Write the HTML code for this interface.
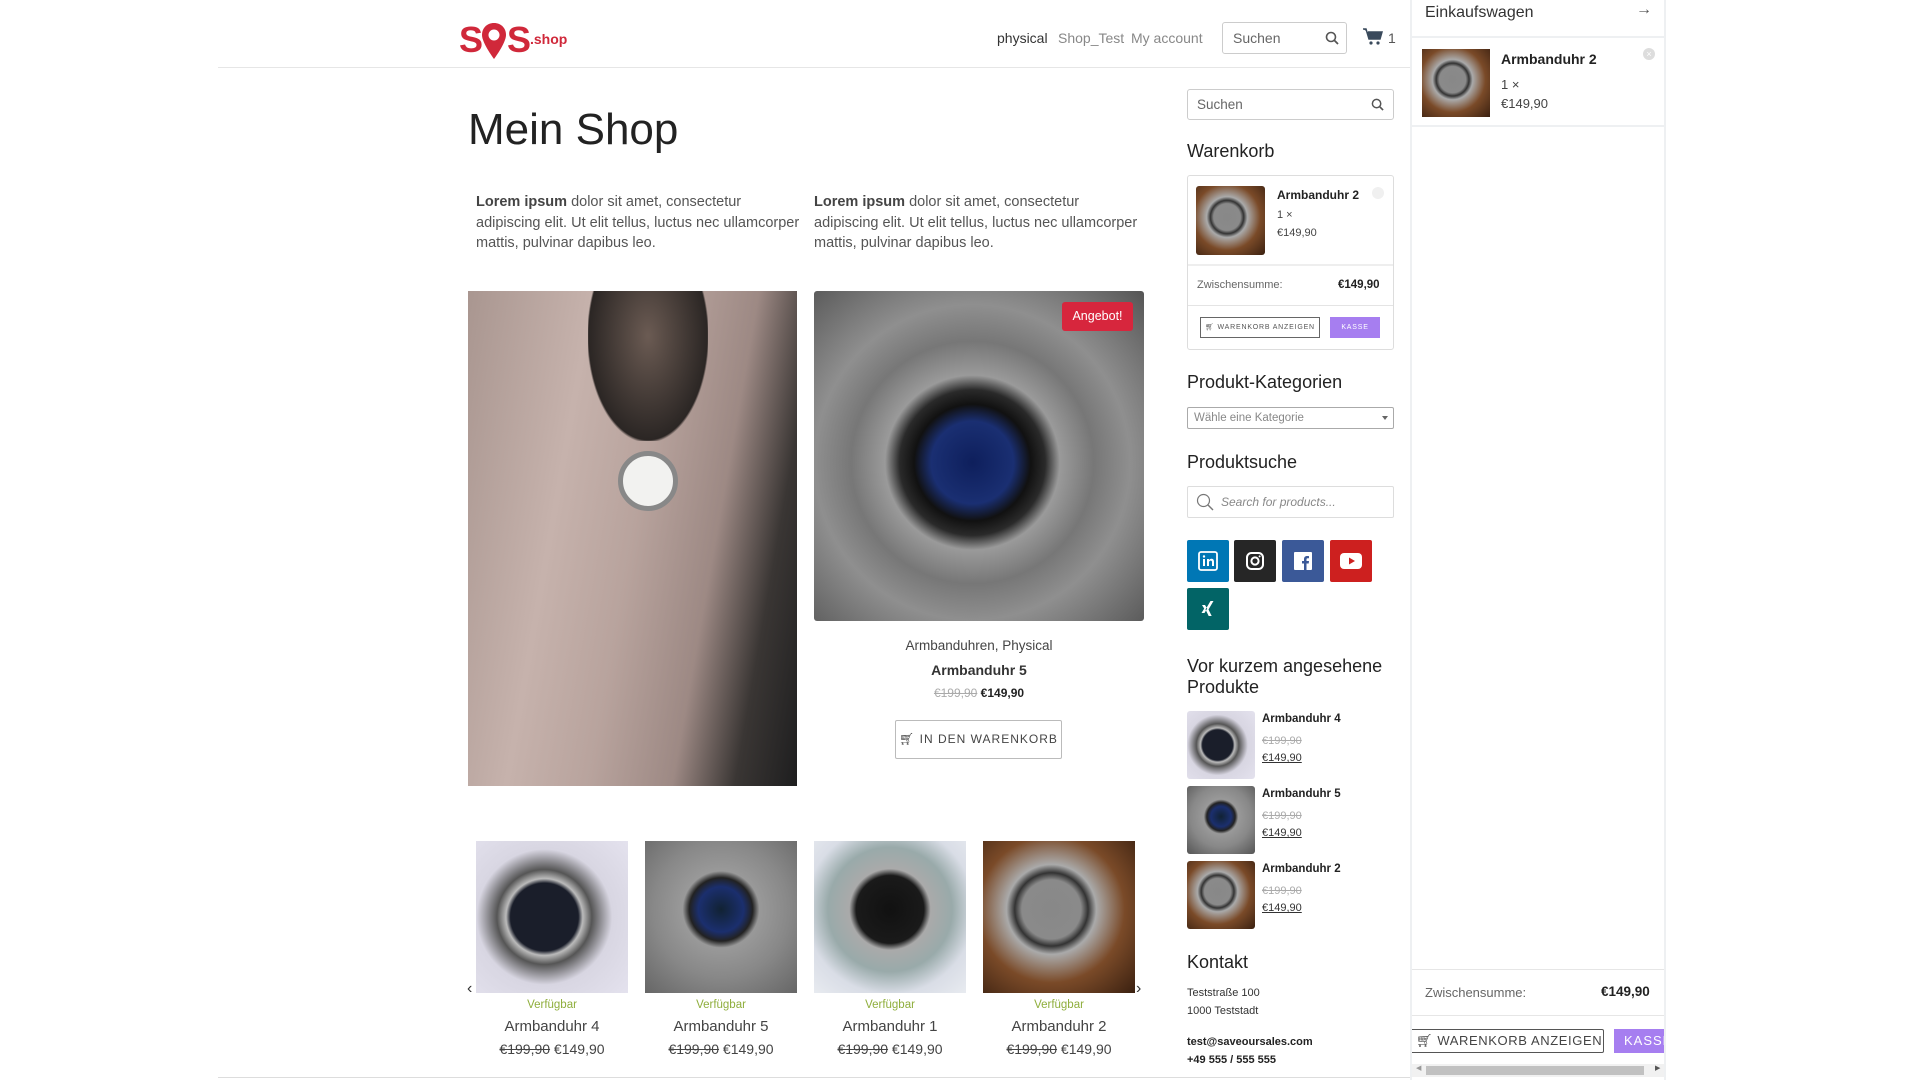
<!DOCTYPE html>
<html><head><meta charset="utf-8"><style>
*{margin:0;padding:0;box-sizing:border-box}
body{width:1920px;height:1080px;overflow:hidden;background:#fff;font-family:"Liberation Sans",sans-serif;color:#333;position:relative}
.a{position:absolute}
.t{position:absolute;white-space:nowrap}
.img{position:absolute;border-radius:3px;overflow:hidden}
.s{text-decoration:line-through;color:#aaa}
h3{font-weight:normal;font-size:18px;color:#222}
.soc{position:absolute;width:42px;height:42px;border-radius:2px;display:flex;align-items:center;justify-content:center}
</style></head><body>
<!-- header -->
<div class="a" style="left:218px;top:67px;width:1192px;height:1px;background:#e6e6e6"></div>
<div class="t" style="left:459px;top:19px;font-size:36px;font-weight:bold;color:#d0283a;letter-spacing:-1px">S</div>
<svg class="a" style="left:481px;top:22px" width="26" height="38" viewBox="0 0 26 38"><path d="M13 1C6 1 1 6 1 13c0 8 12 24 12 24s12-16 12-24C25 6 20 1 13 1z" fill="#d0283a"/><circle cx="13" cy="13" r="5.5" fill="#fff"/></svg>
<div class="t" style="left:507px;top:19px;font-size:36px;font-weight:bold;color:#d0283a">S</div>
<div class="t" style="left:530px;top:31px;font-size:14px;font-weight:bold;color:#d0283a">.shop</div>
<div class="t" style="left:997px;top:30px;font-size:14px;color:#333">physical</div>
<div class="t" style="left:1058px;top:30px;font-size:14px;color:#888">Shop_Test</div>
<div class="t" style="left:1131px;top:30px;font-size:14px;color:#888">My account</div>
<div class="a" style="left:1222px;top:22px;width:125px;height:32px;border:1px solid #ccc;border-radius:3px"></div>
<div class="t" style="left:1233px;top:30px;font-size:14px;color:#666">Suchen</div>
<svg class="a" style="left:1325px;top:31px" width="14" height="14" viewBox="0 0 14 14"><circle cx="6" cy="6" r="4.5" fill="none" stroke="#555" stroke-width="1.6"/><path d="M9.5 9.5l3.5 3.5" stroke="#555" stroke-width="1.8"/></svg>
<svg class="a" style="left:1363px;top:28px" width="20" height="18" viewBox="0 0 20 18"><path d="M0 1h3l3 10h11l2-7H5" fill="#3a4a5c" stroke="#3a4a5c" stroke-width="1.5"/><circle cx="8" cy="15" r="1.6" fill="#3a4a5c"/><circle cx="15" cy="15" r="1.6" fill="#3a4a5c"/></svg>
<div class="t" style="left:1388px;top:30px;font-size:14px;color:#555">1</div>

<!-- main -->
<div class="t" style="left:468px;top:105px;font-size:44px;color:#222">Mein Shop</div>
<div class="a" style="left:476px;top:192px;width:330px;font-size:14.5px;line-height:20.5px;color:#555"><b style="color:#444">Lorem ipsum</b> dolor sit amet, consectetur adipiscing elit. Ut elit tellus, luctus nec ullamcorper mattis, pulvinar dapibus leo.</div>
<div class="a" style="left:814px;top:192px;width:330px;font-size:14.5px;line-height:20.5px;color:#555"><b style="color:#444">Lorem ipsum</b> dolor sit amet, consectetur adipiscing elit. Ut elit tellus, luctus nec ullamcorper mattis, pulvinar dapibus leo.</div>

<div class="img" style="left:468px;top:291px;width:329px;height:495px;border-radius:0;background:linear-gradient(100deg,#a99690 0%,#c6b2ac 30%,#b8a39d 50%,#9d8984 70%,#3a3634 85%,#1e1e1f 100%)">
<div class="a" style="left:120px;top:0;width:120px;height:150px;background:radial-gradient(ellipse at 50% 30%,#6b5b53,#2b2624 70%,transparent 72%)"></div>
<div class="a" style="left:150px;top:160px;width:60px;height:60px;border-radius:50%;background:#f2f2f0;border:5px solid #888"></div>
</div>
<div class="img" style="left:814px;top:291px;width:330px;height:330px;background:radial-gradient(circle at 48% 52%,#0e1f5c 0,#1a2f72 17%,#111 24%,#2a2a2a 30%,#9a9a9a 36%,#777 50%,#8f8f8f 65%,#555 100%)">
<div class="a" style="left:248px;top:11px;width:71px;height:29px;background:#d7263d;border-radius:3px;color:#fff;font-size:12.5px;text-align:center;line-height:29px">Angebot!</div></div>
<div class="t" style="left:814px;width:330px;text-align:center;top:638px;font-size:13.5px;color:#444">Armbanduhren, Physical</div>
<div class="t" style="left:814px;width:330px;text-align:center;top:662px;font-size:14px;color:#333;font-weight:600">Armbanduhr 5</div>
<div class="t" style="left:814px;width:330px;text-align:center;top:686px;font-size:12px;color:#222"><span class="s">€199,90</span> <b>€149,90</b></div>
<div class="a" style="left:895px;top:720px;width:167px;height:39px;border:1px solid #bbb;border-radius:2px;font-size:12px;letter-spacing:1px;color:#444;text-align:center;line-height:37px">🛒︎ IN DEN WARENKORB</div>

<!-- carousel -->
<div class="img" style="left:476px;top:841px;width:152px;height:152px;border-radius:0;background:radial-gradient(circle at 45% 50%,#1a1e2a 0,#1a1e2a 30%,#bbb 34%,#555 42%,#d8d6e2 60%,#e4e2ee 100%)"></div>
<div class="img" style="left:645px;top:841px;width:152px;height:152px;border-radius:0;background:radial-gradient(circle at 50% 45%,#123 0,#1b2f6e 20%,#222 28%,#999 34%,#888 60%,#666 100%)"></div>
<div class="img" style="left:814px;top:841px;width:152px;height:152px;border-radius:0;background:radial-gradient(circle at 50% 45%,#111 0,#1a1a1a 30%,#aaa 36%,#9aa 55%,#d9dde6 75%,#e8ebf0 100%)"></div>
<div class="img" style="left:983px;top:841px;width:152px;height:152px;border-radius:0;background:radial-gradient(circle at 45% 45%,#888 0,#8a8a8a 25%,#333 31%,#aaa 38%,#7a4a28 62%,#3a2010 100%)"></div>
<div class="t" style="left:467px;top:980px;font-size:16px;color:#333">‹</div>
<div class="t" style="left:1136px;top:980px;font-size:16px;color:#333">›</div>
<div class="t" style="left:476px;width:152px;text-align:center;top:999px;font-size:11.5px;color:#8fae3c">Verfügbar</div>
<div class="t" style="left:645px;width:152px;text-align:center;top:999px;font-size:11.5px;color:#8fae3c">Verfügbar</div>
<div class="t" style="left:814px;width:152px;text-align:center;top:999px;font-size:11.5px;color:#8fae3c">Verfügbar</div>
<div class="t" style="left:983px;width:152px;text-align:center;top:999px;font-size:11.5px;color:#8fae3c">Verfügbar</div>
<div class="t" style="left:476px;width:152px;text-align:center;top:1018px;font-size:15px;color:#444">Armbanduhr 4</div>
<div class="t" style="left:645px;width:152px;text-align:center;top:1018px;font-size:15px;color:#444">Armbanduhr 5</div>
<div class="t" style="left:814px;width:152px;text-align:center;top:1018px;font-size:15px;color:#444">Armbanduhr 1</div>
<div class="t" style="left:983px;width:152px;text-align:center;top:1018px;font-size:15px;color:#444">Armbanduhr 2</div>
<div class="t" style="left:476px;width:152px;text-align:center;top:1041px;font-size:14px;color:#444"><s>€199,90</s> €149,90</div>
<div class="t" style="left:645px;width:152px;text-align:center;top:1041px;font-size:14px;color:#444"><s>€199,90</s> €149,90</div>
<div class="t" style="left:814px;width:152px;text-align:center;top:1041px;font-size:14px;color:#444"><s>€199,90</s> €149,90</div>
<div class="t" style="left:983px;width:152px;text-align:center;top:1041px;font-size:14px;color:#444"><s>€199,90</s> €149,90</div>
<div class="a" style="left:218px;top:1077px;width:1192px;height:1px;background:#ddd"></div>

<!-- sidebar -->
<div class="a" style="left:1187px;top:89px;width:207px;height:31px;border:1px solid #ccc;border-radius:3px"></div>
<div class="t" style="left:1197px;top:97px;font-size:13.5px;color:#666">Suchen</div>
<svg class="a" style="left:1371px;top:98px" width="13" height="13" viewBox="0 0 14 14"><circle cx="6" cy="6" r="4.5" fill="none" stroke="#555" stroke-width="1.6"/><path d="M9.5 9.5l3.5 3.5" stroke="#555" stroke-width="1.8"/></svg>
<h3 class="t" style="left:1187px;top:141px">Warenkorb</h3>
<div class="a" style="left:1187px;top:175px;width:207px;height:175px;border:1px solid #ddd;border-radius:3px"></div>
<div class="img" style="left:1196px;top:186px;width:69px;height:69px;background:radial-gradient(circle at 45% 45%,#888 0,#8a8a8a 25%,#333 31%,#aaa 38%,#7a4a28 62%,#3a2010 100%)"></div>
<div class="t" style="left:1277px;top:188px;font-size:12px;font-weight:bold;color:#222">Armbanduhr 2</div>
<div class="a" style="left:1372px;top:187px;width:12px;height:12px;border-radius:50%;background:#f0f0f0"></div>
<div class="t" style="left:1277px;top:209px;font-size:11px;color:#444">1 ×</div>
<div class="t" style="left:1277px;top:227px;font-size:11px;color:#444">€149,90</div>
<div class="a" style="left:1188px;top:264px;width:205px;height:2px;background:#eee"></div>
<div class="t" style="left:1197px;top:279px;font-size:11px;color:#666">Zwischensumme:</div>
<div class="t" style="left:1338px;top:279px;font-size:11.5px;font-weight:bold;color:#222">€149,90</div>
<div class="a" style="left:1188px;top:305px;width:205px;height:1px;background:#e4e4e4"></div>
<div class="a" style="left:1200px;top:317px;width:120px;height:21px;border:1px solid #666;font-size:7px;letter-spacing:.8px;color:#555;text-align:center;line-height:19px">🛒︎ WARENKORB ANZEIGEN</div>
<div class="a" style="left:1330px;top:317px;width:50px;height:21px;background:#a67ef0;font-size:7px;letter-spacing:.8px;color:#fff;text-align:center;line-height:21px">KASSE</div>
<h3 class="t" style="left:1187px;top:372px">Produkt-Kategorien</h3>
<div class="a" style="left:1187px;top:407px;width:207px;height:22px;border:1px solid #aaa;border-radius:2px;font-size:11.5px;color:#888;padding:4px 6px">Wähle eine Kategorie</div>
<div class="a" style="left:1382px;top:416px;border:3px solid transparent;border-top:4px solid #666"></div>
<h3 class="t" style="left:1187px;top:452px">Produktsuche</h3>
<div class="a" style="left:1187px;top:486px;width:207px;height:32px;border:1px solid #ddd;border-radius:2px"></div>
<svg class="a" style="left:1196px;top:493px" width="18" height="18" viewBox="0 0 18 18"><circle cx="7.5" cy="7.5" r="6" fill="none" stroke="#777" stroke-width="1.2"/><path d="M12 12l5 5" stroke="#777" stroke-width="1.4"/></svg>
<div class="t" style="left:1221px;top:495px;font-size:12px;font-style:italic;color:#888">Search for products...</div>
<div class="soc" style="left:1187px;top:540px;background:#0077b5"><svg width="20" height="20" viewBox="0 0 20 20"><rect x="1" y="1" width="18" height="18" rx="2" fill="none" stroke="#fff" stroke-width="1.8"/><rect x="5" y="8" width="2" height="7" fill="#fff"/><circle cx="6" cy="5.5" r="1.2" fill="#fff"/><path d="M9 8h2v1.2c.5-.8 1.3-1.4 2.5-1.4 1.6 0 2.5 1 2.5 3V15h-2v-3.8c0-1-.4-1.6-1.3-1.6s-1.7.6-1.7 1.7V15H9z" fill="#fff"/></svg></div>
<div class="soc" style="left:1234px;top:540px;background:#262626"><svg width="20" height="20" viewBox="0 0 20 20"><rect x="2" y="2" width="16" height="16" rx="4.5" fill="none" stroke="#fff" stroke-width="2"/><circle cx="10" cy="10" r="3.6" fill="none" stroke="#fff" stroke-width="2"/><circle cx="14.6" cy="5.4" r="1" fill="#fff"/></svg></div>
<div class="soc" style="left:1282px;top:540px;background:#3b5998"><svg width="20" height="20" viewBox="0 0 20 20"><rect x="1" y="1" width="18" height="18" rx="1" fill="#fff"/><path d="M13.5 19v-6.5h2.2l.3-2.5h-2.5V8.5c0-.7.2-1.2 1.2-1.2H16V5.1c-.3 0-1-.1-1.9-.1-1.9 0-3.1 1.1-3.1 3.2V10H9v2.5h2V19z" fill="#3b5998"/></svg></div>
<div class="soc" style="left:1330px;top:540px;background:#cd201f"><svg width="22" height="16" viewBox="0 0 22 16"><rect x="0" y="0" width="22" height="16" rx="4" fill="#fff"/><path d="M9 4.5v7l6-3.5z" fill="#cd201f"/></svg></div>
<div class="soc" style="left:1187px;top:588px;background:#026466"><svg width="20" height="20" viewBox="0 0 20 20"><path d="M4 6h3l2.2 3.6L6.5 14h-3l2.7-4.4zM15.5 2h-3l-5 8.5L10.7 17h3l-3.2-6.5z" fill="#fff"/></svg></div>
<h3 class="a" style="left:1187px;top:656px;line-height:21px;width:220px">Vor kurzem angesehene Produkte</h3>
<div class="img" style="left:1187px;top:711px;width:68px;height:68px;background:radial-gradient(circle at 45% 50%,#1a1e2a 0,#1a1e2a 30%,#bbb 34%,#555 42%,#d8d6e2 60%,#e4e2ee 100%)"></div>
<div class="img" style="left:1187px;top:786px;width:68px;height:68px;background:radial-gradient(circle at 50% 45%,#123 0,#1b2f6e 20%,#222 28%,#999 34%,#888 60%,#555 100%)"></div>
<div class="img" style="left:1187px;top:861px;width:68px;height:68px;background:radial-gradient(circle at 45% 45%,#888 0,#8a8a8a 25%,#333 31%,#aaa 38%,#7a4a28 62%,#3a2010 100%)"></div>
<div class="t" style="left:1262px;top:713px;font-size:11.5px;font-weight:bold;color:#222">Armbanduhr 4</div>
<div class="t" style="left:1262px;top:735px;font-size:11px" ><span class="s">€199,90</span></div>
<div class="t" style="left:1262px;top:752px;font-size:11px;text-decoration:underline;color:#333">€149,90</div>
<div class="t" style="left:1262px;top:788px;font-size:11.5px;font-weight:bold;color:#222">Armbanduhr 5</div>
<div class="t" style="left:1262px;top:810px;font-size:11px"><span class="s">€199,90</span></div>
<div class="t" style="left:1262px;top:827px;font-size:11px;text-decoration:underline;color:#333">€149,90</div>
<div class="t" style="left:1262px;top:863px;font-size:11.5px;font-weight:bold;color:#222">Armbanduhr 2</div>
<div class="t" style="left:1262px;top:885px;font-size:11px"><span class="s">€199,90</span></div>
<div class="t" style="left:1262px;top:902px;font-size:11px;text-decoration:underline;color:#333">€149,90</div>
<h3 class="t" style="left:1187px;top:952px">Kontakt</h3>
<div class="t" style="left:1187px;top:985px;font-size:11px;color:#333;line-height:17.5px">Teststraße 100<br>1000 Teststadt</div>
<div class="t" style="left:1187px;top:1034px;font-size:11px;font-weight:bold;color:#222;line-height:17.5px">test@saveoursales.com<br>+49 555 / 555 555</div>

<!-- side panel -->
<div class="a" style="left:1410px;top:0;width:256px;height:1080px;border-left:2px solid #eef0f2;border-right:2px solid #eef0f2;background:#fff"></div>
<div class="t" style="left:1425px;top:4px;font-size:16px;color:#333">Einkaufswagen</div>
<div class="t" style="left:1636px;top:1px;font-size:16px;color:#555">→</div>
<div class="a" style="left:1412px;top:36px;width:252px;height:2px;background:#eef0f2"></div>
<div class="img" style="left:1422px;top:49px;width:68px;height:68px;border-radius:0;background:radial-gradient(circle at 45% 45%,#888 0,#8a8a8a 25%,#333 31%,#aaa 38%,#7a4a28 62%,#3a2010 100%)"></div>
<div class="t" style="left:1501px;top:51px;font-size:14px;font-weight:bold;color:#222">Armbanduhr 2</div>
<div class="a" style="left:1643px;top:48px;width:12px;height:12px;border-radius:50%;background:#ddd;color:#fff;font-size:9px;text-align:center;line-height:12px">×</div>
<div class="t" style="left:1501px;top:77px;font-size:13px;color:#444">1 ×</div>
<div class="t" style="left:1501px;top:96px;font-size:13px;color:#444">€149,90</div>
<div class="a" style="left:1412px;top:125px;width:252px;height:2px;background:#eef0f2"></div>
<div class="a" style="left:1412px;top:969px;width:252px;height:1px;background:#e6e6e6"></div>
<div class="t" style="left:1425px;top:985px;font-size:13px;color:#666">Zwischensumme:</div>
<div class="t" style="left:1601px;top:984px;font-size:13.5px;font-weight:bold;color:#222">€149,90</div>
<div class="a" style="left:1412px;top:1015px;width:252px;height:1px;background:#e6e6e6"></div>
<div class="a" style="left:1412px;top:1029px;width:192px;height:24px;border:1px solid #555;border-left:none;border-radius:0 2px 2px 0;font-size:13px;letter-spacing:.6px;color:#444;line-height:22px;padding-left:4px;white-space:nowrap">🛒︎ WARENKORB ANZEIGEN</div>
<div class="a" style="left:1614px;top:1029px;width:50px;height:24px;background:#a67ef0;font-size:13px;letter-spacing:1px;color:#fff;line-height:24px;padding-left:10px;overflow:hidden;white-space:nowrap">KASSE</div>
<div class="a" style="left:1412px;top:1064px;width:252px;height:13px;background:#f1f1f1"></div>
<div class="a" style="left:1426px;top:1066px;width:218px;height:9px;background:#c1c1c1"></div>
<div class="t" style="left:1416px;top:1064px;font-size:7px;color:#999">◀</div>
<div class="t" style="left:1655px;top:1064px;font-size:7px;color:#555">▶</div>
</body></html>
